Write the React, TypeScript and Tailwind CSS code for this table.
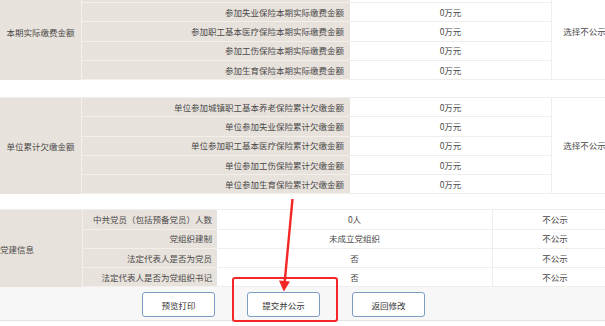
const FEE_ROWS = [
    "参加城镇职工基本养老保险本期实际缴费金额",
    "参加失业保险本期实际缴费金额",
    "参加职工基本医疗保险本期实际缴费金额",
    "参加工伤保险本期实际缴费金额",
    "参加生育保险本期实际缴费金额",
];

const DEBT_ROWS = [
    "单位参加城镇职工基本养老保险累计欠缴金额",
    "单位参加失业保险累计欠缴金额",
    "单位参加职工基本医疗保险累计欠缴金额",
    "单位参加工伤保险累计欠缴金额",
    "单位参加生育保险累计欠缴金额",
];

const PARTY_ROWS = [
    { label: "中共党员（包括预备党员）人数", value: "0人" },
    { label: "党组织建制", value: "未成立党组织" },
    { label: "法定代表人是否为党员", value: "否" },
    { label: "法定代表人是否为党组织书记", value: "否" },
];

function MoneySection({ title, rows, className = "" }: { title: string; rows: string[]; className?: string }) {
    return (
        <div className={`flex w-[617px] ${className}`}>
            <div className="w-[82px] shrink-0 bg-[#e8e2dc] border-r border-[#f3efeb] flex items-center justify-center">
                {title}
            </div>
            <div className="w-[469px] shrink-0 flex flex-col">
                {rows.map((r) => (
                    <div key={r} className="flex h-[19.25px]">
                        <div className="w-[268px] shrink-0 bg-[#e8e2dc] border-b border-[#f3efeb] flex items-center justify-end pr-[6px]">
                            {r}
                        </div>
                        <div className="flex-1 border-b border-[#eeeeee] flex items-center justify-center">0万元</div>
                    </div>
                ))}
            </div>
            <div className="w-[66px] shrink-0 border-l border-b border-[#eeeeee] flex items-center justify-center">
                选择不公示
            </div>
        </div>
    );
}

export default function App() {
    return (
        <div className="relative w-[605px] h-[326px] overflow-hidden bg-white text-[8.5px] leading-none text-[#4a4a4a] font-['Noto_Sans_CJK_SC','Noto_Sans',sans-serif]">
            <MoneySection title="本期实际缴费金额" rows={FEE_ROWS} className="-mt-[16.25px]" />
            <MoneySection title="单位累计欠缴金额" rows={DEBT_ROWS} className="mt-[17px] border-t border-[#eeeeee]" />

            <div className="flex w-[617px] mt-[15px] border-t border-[#eeeeee]">
                <div className="w-[83px] shrink-0 bg-[#e8e2dc] border-r border-[#f3efeb] flex items-center">党建信息</div>
                <div className="flex-1 flex flex-col">
                    {PARTY_ROWS.map((r) => (
                        <div key={r.label} className="flex h-[19.25px]">
                            <div className="w-[134px] shrink-0 bg-[#e8e2dc] border-b border-[#f3efeb] flex items-center justify-end pr-[5px]">
                                {r.label}
                            </div>
                            <div className="w-[275px] shrink-0 border-b border-[#eeeeee] flex items-center justify-center">
                                {r.value}
                            </div>
                            <div className="flex-1 border-l border-b border-[#eeeeee] flex items-center justify-center">
                                不公示
                            </div>
                        </div>
                    ))}
                </div>
            </div>

            <div className="h-[34px] bg-[#f7f7f7] border-b border-[#e4e4e4] flex gap-[32px] pl-[142px] pt-[5px]">
                {["预览打印", "提交并公示", "返回修改"].map((b) => (
                    <button
                        key={b}
                        type="button"
                        className="w-[73px] h-[25px] bg-white border border-[#7d9cc4] rounded-[3px] text-[8.5px] text-[#333] flex items-center justify-center"
                    >
                        {b}
                    </button>
                ))}
            </div>

            {/* annotation */}
            <div className="absolute left-[232px] top-[277px] w-[106px] h-[45px] border-2 border-[#f42626] rounded-[3px]" />
            <svg className="absolute left-0 top-0 pointer-events-none" width="605" height="326" viewBox="0 0 605 326">
                <line x1="292.5" y1="199" x2="284.5" y2="284" stroke="#f42626" strokeWidth="2.4" />
                <polygon points="279,280.5 290,281.5 283.8,291.5" fill="#f42626" />
            </svg>
        </div>
    );
}
